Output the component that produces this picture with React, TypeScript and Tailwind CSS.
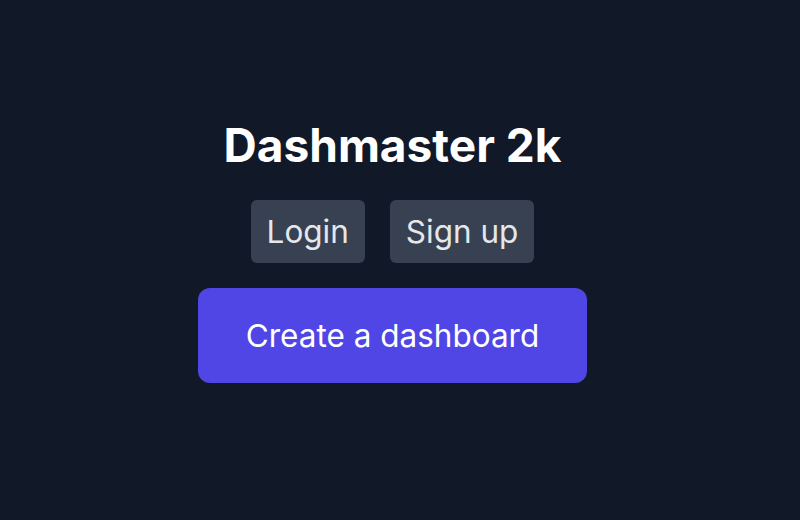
export default function App() {
  return (
    <div
      className="min-h-screen w-full bg-[#111827] pr-[15px] pt-[117px]"
      style={{ fontFamily: "Inter, 'Noto Sans', sans-serif" }}
    >
      <div className="flex flex-col items-center">
        <h1 className="text-[46px] leading-[56px] font-bold text-white">Dashmaster 2k</h1>
        <div className="mt-[27px] flex gap-[25px]">
          <button className="h-[63px] rounded-md bg-[#374151] px-4 text-[31.5px] text-[#e5e7eb]">Login</button>
          <button className="h-[63px] rounded-md bg-[#374151] px-4 text-[31.5px] text-[#e5e7eb]">Sign up</button>
        </div>
        <button className="mt-[25px] h-[95px] rounded-xl bg-[#4f46e5] px-12 text-[31.5px] text-white">
          Create a dashboard
        </button>
      </div>
    </div>
  )
}
